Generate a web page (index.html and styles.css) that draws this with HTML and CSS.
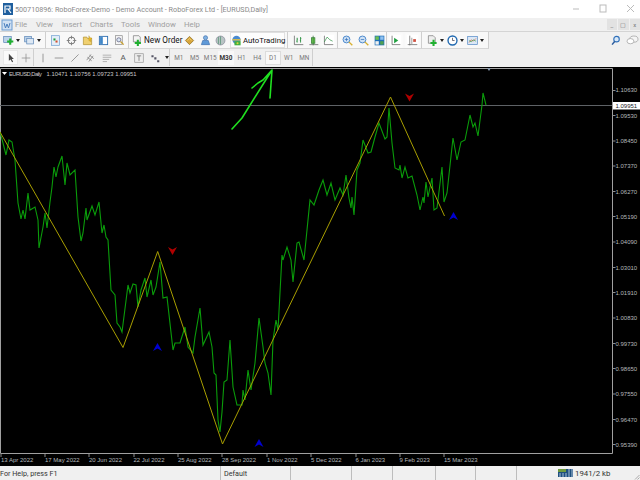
FILE: index.html
```html
<!DOCTYPE html>
<html>
<head>
<meta charset="utf-8">
<title>RoboForex</title>
<link rel="stylesheet" href="styles.css">
</head>
<body>
<div class="app">
  <header class="titlebar">
    <svg class="appicon" viewBox="0 0 10 12"><rect width="10" height="12" fill="#1f5f9e"/><path d="M2 10V3h5v3H3M5 6l3 4" fill="none" stroke="#fff" stroke-width="1.2"/></svg>
    <span class="title">500710896: RoboForex-Demo - Demo Account - RoboForex Ltd - [EURUSD,Daily]</span>
    <div class="wincontrols">
      <svg viewBox="0 0 10 10" class="wc"><path d="M1 5h6" stroke="#bbb" fill="none"/></svg>
      <svg viewBox="0 0 10 10" class="wc"><rect x="1" y="1" width="6" height="7" stroke="#bbb" fill="none"/></svg>
      <svg viewBox="0 0 10 10" class="wc"><path d="M1 1l7 7M8 1L1 8" stroke="#bbb" fill="none"/></svg>
    </div>
  </header>

  <nav class="menubar">
    <svg class="menuicon" viewBox="0 0 12 12"><rect x="1" y="1" width="10" height="10" fill="#cfe0f2" stroke="#6a9bd0"/><path d="M3 4l1.500 5 1.500-4 1.500 4L9 4" fill="none" stroke="#4a7fbd"/></svg>
    <span class="m1">File</span><span class="m2">View</span><span class="m3">Insert</span><span class="m4">Charts</span><span class="m5">Tools</span><span class="m6">Window</span><span class="m7">Help</span>
    <div class="mdi"><i>_</i><i>&#9634;</i><i>x</i></div>
  </nav>

  <div class="toolrow row1">
    <div class="grp g1">
      <svg class="ic" viewBox="0 0 16 16"><rect x="1" y="2" width="11" height="9" fill="#bcd3ea" stroke="#5a85b5"/><path d="M9 5h3v3h3v3h-3v3H9v-3H6V8h3z" fill="#20b030"/></svg><b class="dd"></b>
      <svg class="ic gapl" viewBox="0 0 16 16"><rect x="1" y="2" width="10" height="8" fill="#bcd3ea" stroke="#5a85b5"/><rect x="4" y="5" width="10" height="8" fill="#dde8f4" stroke="#5a85b5"/></svg><b class="dd"></b>
    </div>
    <div class="grp g2">
      <svg class="ic" viewBox="0 0 16 16"><rect x="2" y="1" width="12" height="14" fill="#e4eef8" stroke="#6a9bd0"/><path d="M5 5h3v3H5z" fill="#20a040"/><path d="M8 8h3v3H8z" fill="#d05030"/></svg>
      <svg class="ic" viewBox="0 0 16 16"><circle cx="8" cy="8" r="5" fill="none" stroke="#666" stroke-width="1.300"/><path d="M8 1v5M8 10v5M1 8h5M10 8h5" stroke="#666"/></svg>
      <svg class="ic" viewBox="0 0 16 16"><path d="M2 3h5l1 2h6v9H2z" fill="#f0d070" stroke="#b09030"/><path d="M10 1l1.500 3 3 .5-2 2 .5 3-3-1.500z" fill="#f4c020" stroke="#a08020" stroke-width=".5"/></svg>
      <svg class="ic" viewBox="0 0 16 16"><rect x="2" y="2" width="12" height="12" fill="#fff" stroke="#2f6fb0" stroke-width="1.300"/><rect x="3" y="3" width="4" height="10" fill="#3f86c8"/></svg>
      <svg class="ic" viewBox="0 0 16 16"><rect x="2" y="1" width="10" height="13" fill="#f6f6f6" stroke="#888"/><circle cx="7" cy="7" r="3" fill="#dbe8f5" stroke="#557"/><path d="M9.500 9.500L14 14" stroke="#c8a030" stroke-width="2"/></svg>
    </div>
    <div class="grp g3">
      <svg class="ic" viewBox="0 0 16 16"><path d="M2 1h8l2 2v7H2z" fill="#f4f4f4" stroke="#777"/><path d="M7 7h3v3h3v3h-3v3H7v-3H4v-3h3z" fill="#20b030"/></svg>
      <span class="neworder">New Order</span>
      <svg class="ic i5" viewBox="0 0 16 16"><path d="M2 8l6-6 6 6-6 6z" fill="#d9a63a" stroke="#8a6a1e"/><path d="M5 8l3-3 3 3" fill="none" stroke="#f4df90"/></svg>
      <svg class="ic i5" viewBox="0 0 16 16"><circle cx="8" cy="4" r="3" fill="#7fb0e0" stroke="#3f70b0"/><path d="M2 14l2-6h8l2 6z" fill="#5f9ad8" stroke="#3f70b0"/></svg>
      <svg class="ic i4" viewBox="0 0 16 16"><circle cx="8" cy="8" r="6.500" fill="#b8c4c4" stroke="#889"/><path d="M8 2v12M5 3v10" stroke="#4f8f6f"/></svg>
      <div class="auto">
        <svg class="ic" viewBox="0 0 16 16"><circle cx="8" cy="7" r="6" fill="#4a8ad0"/><path d="M2 7h12" stroke="#e0c040" stroke-width="2"/><path d="M5 9h9v6H5z" fill="#40b040"/><circle cx="9.500" cy="12" r="1.500" fill="#e0d040"/></svg>
        <span>AutoTrading</span>
      </div>
    </div>
    <div class="grp g4">
      <svg class="ic" viewBox="0 0 16 16"><path d="M2 1v13h13" fill="none" stroke="#555"/><path d="M6 4v7M5 9h1M6 6h1M11 3v8M10 8h1M11 5h1" stroke="#2a9040" stroke-width="1.300"/></svg>
      <svg class="ic" viewBox="0 0 16 16"><path d="M2 14h13" stroke="#555"/><rect x="5" y="4" width="5" height="8" fill="#70d050" stroke="#2a7030"/><path d="M7.500 1v14" stroke="#2a7030"/></svg>
      <svg class="ic on" viewBox="0 0 16 16"><path d="M2 1v13h13" fill="none" stroke="#555"/><path d="M2 10l4-7 4 4 4 2" fill="none" stroke="#2a9040"/></svg>
    </div>
    <div class="grp g5">
      <svg class="ic" viewBox="0 0 16 16"><circle cx="6.500" cy="6.500" r="5" fill="#cfe2f6" stroke="#3f80c8" stroke-width="1.300"/><path d="M4 6.500h5M6.500 4v5" stroke="#2f6fb8"/><path d="M10 10l5 5" stroke="#d8b030" stroke-width="2"/></svg>
      <svg class="ic" viewBox="0 0 16 16"><circle cx="6.500" cy="6.500" r="5" fill="#cfe2f6" stroke="#3f80c8" stroke-width="1.300"/><path d="M4 6.500h5" stroke="#2f6fb8"/><path d="M10 10l5 5" stroke="#d8b030" stroke-width="2"/></svg>
      <svg class="ic" viewBox="0 0 16 16"><rect x="1" y="1" width="14" height="14" fill="#1f70b8"/><rect x="2" y="2" width="5" height="5" fill="#70c050"/><rect x="9" y="2" width="5" height="5" fill="#8fc0f0"/><rect x="2" y="9" width="5" height="5" fill="#f0f0f0"/><rect x="9" y="9" width="5" height="5" fill="#50a050"/></svg>
    </div>
    <div class="grp g6">
      <svg class="ic on" viewBox="0 0 16 16"><path d="M3 1v13h12" fill="none" stroke="#555"/><path d="M6 4l6 4-6 4z" fill="#20a040"/></svg>
      <svg class="ic on" viewBox="0 0 16 16"><path d="M4 1v14M1 14h14" stroke="#555"/><path d="M7 4v9" stroke="#777"/><rect x="9" y="6" width="4" height="4" fill="#d05040"/></svg>
    </div>
    <div class="grp g7">
      <svg class="ic" viewBox="0 0 16 16"><path d="M2 1h7l3 3v8H2z" fill="#eee" stroke="#777"/><path d="M8 7h3v3h3v3h-3v3H8v-3H5v-3h3z" fill="#20b030"/></svg><b class="dd"></b>
      <svg class="ic gaps" viewBox="0 0 16 16"><circle cx="8" cy="8" r="6.500" fill="#fff" stroke="#1f68b0" stroke-width="2"/><path d="M8 4v4h3" stroke="#334" fill="none"/></svg><b class="dd"></b>
      <svg class="ic gaps" viewBox="0 0 16 16"><rect x="1" y="2" width="14" height="12" fill="#dce8f6" stroke="#4f86c4"/><path d="M3 11l3-4 3 2 4-4" fill="none" stroke="#d06040"/><path d="M3 8l3 2 3-3 4 2" fill="none" stroke="#40a050"/></svg><b class="dd"></b>
    </div>
    <div class="search">
      <svg class="ic" viewBox="0 0 16 16"><circle cx="9.500" cy="6" r="4" fill="#d8e8f8" stroke="#2f6fb8" stroke-width="1.600"/><path d="M7 9l-4 5" stroke="#2f5f9f" stroke-width="2.200"/></svg>
      <svg class="ic chat" viewBox="0 0 18 16"><ellipse cx="11" cy="6" rx="6" ry="4.500" fill="#f4f4f4" stroke="#999"/><ellipse cx="6" cy="9" rx="5" ry="3.800" fill="#fff" stroke="#999"/></svg>
    </div>
  </div>

  <div class="toolrow row2">
    <div class="grp t1">
      <span class="toolbtn on"><svg viewBox="0 0 12 14"><path d="M3 1v10l2.500-2 2 4 1.500-.8-2-3.700H10z" fill="#444"/></svg></span>
      <span class="toolbtn"><svg viewBox="0 0 14 14"><path d="M7 1v12M1 7h12" stroke="#888" fill="none"/></svg></span>
    </div>
    <div class="grp t2">
      <span class="toolbtn"><svg viewBox="0 0 14 14"><path d="M7 1v12" stroke="#777" fill="none"/></svg></span>
      <span class="toolbtn"><svg viewBox="0 0 14 14"><path d="M1 7h12" stroke="#777" fill="none"/></svg></span>
      <span class="toolbtn"><svg viewBox="0 0 14 14"><path d="M2 12L12 2" stroke="#777" fill="none"/></svg></span>
      <span class="toolbtn"><svg viewBox="0 0 14 14"><path d="M1 10l6-8M4 12l6-8M2 6l6 5M5 3l6 5" stroke="#777" fill="none"/></svg></span>
      <span class="toolbtn"><svg viewBox="0 0 14 14"><path d="M1 3h12M1 6h12M1 9h9M1 12h6" stroke="#999" fill="none"/></svg></span>
      <span class="toolbtn a">A</span>
      <span class="toolbtn"><svg viewBox="0 0 14 14"><rect x="1" y="1" width="12" height="12" fill="#eee" stroke="#999"/><path d="M4 4h6M7 4v7" stroke="#666" fill="none"/></svg></span>
      <span class="toolbtn"><svg viewBox="0 0 14 14"><path d="M2 3h3v3H2zM6 6h3v3H6zM10 10h3v3h-3z" fill="#556"/></svg></span><b class="dd"></b>
    </div>
    <div class="grp tf">
      <span>M1</span><span>M5</span><span>M15</span><span class="m30">M30</span><span>H1</span><span>H4</span><span class="d1">D1</span><span>W1</span><span>MN</span>
    </div>
  </div>

  <main class="chart">
    <svg class="plot" viewBox="0 0 640 399" xmlns="http://www.w3.org/2000/svg">
      <g transform="translate(0,-67)">
        <path class="frame" d="M.5 68.500H612.500V453.500H.5z"/>
        <path class="axis" d="M612.500 90.500h3M612.500 115.500h3M612.500 141h3M612.500 166h3M612.500 191.500h3M612.500 216.500h3M612.500 242h3M612.500 267.500h3M612.500 292.500h3M612.500 318h3M612.500 343.500h3M612.500 368.500h3M612.500 394h3M612.500 419.500h3M612.500 444.500h3"/>
        <path class="axis" d="M1 454v3M45 454v3M89 454v3M134 454v3M178 454v3M222 454v3M267 454v3M311 454v3M356 454v3M400 454v3M444 454v3"/>
        <path class="bid" d="M0 105.500H612"/>
        <polyline class="price" points="0,132 3,143 6,155 9,140 12,142 15,160 18,203 21,219 23,210 25,219 28,193 30,210 35,207 38,220 39,248 43,227 45,213 47,228 50,202 52,187 54,167 56,177 58,167 62,156 65,185 67,163 70,175 75,170 78,217 81,241 83,233 86,208 87,220 92,206 95,215 99,202 102,233 104,225 106,237 108,240 111,290 115,295 117,323 120,327 122,332 128,285 130,293 133,284 136,285 138,307 141,290 145,278 147,297 151,280 153,295 156,287 160,262 163,298 167,297 173,350 175,343 180,343 185,327 188,347 193,353 195,337 200,308 203,345 209,332 212,347 214,373 216,375 218,420 220,432 222,412 224,382 227,380 230,340 233,387 237,405 242,405 243,390 245,400 248,370 251,390 255,363 259,318 263,347 265,363 268,373 271,395 273,340 276,320 278,330 282,255 283,260 287,247 291,260 293,282 297,243 299,242 304,260 307,230 310,200 314,205 319,190 323,180 327,195 331,183 335,200 340,188 343,195 346,175 349,198 351,208 352,197 354,215 357,170 360,163 363,140 368,153 371,152 375,137 379,123 385,139 387,137 389,108 392,143 395,168 399,170 400,165 402,178 405,167 408,178 412,176 417,195 420,210 423,197 424,203 426,182 428,197 432,178 434,210 437,208 442,167 444,202 447,193 453,138 457,160 461,142 465,140 470,115 473,127 475,123 478,136 482,105 483,93 486,105"/>
        <polyline class="zig" points="0,132 123,347.500 157.700,251.500 222.500,444 390.500,97 444.500,216"/>
        <path class="red" d="M405 93.500l4.500 2.500 4.500-2.500-4.500 8z"/>
        <path class="red" d="M168 247l4.500 2.500 4.500-2.500-4.500 8z"/>
        <path class="blue" d="M157.500 343l4.500 8-4.500-2.500-4.500 2.500z"/>
        <path class="blue" d="M259 439l4.500 8-4.500-2.500-4.500 2.500z"/>
        <path class="blue" d="M453.500 212l4.500 8-4.500-2.500-4.500 2.500z"/>
        <path class="marker" d="M487 68l2 3 2-3z"/>
        <path class="corner" d="M2 72h5l-2.500 3z"/>
        <text class="head" x="9" y="75.500" textLength="33">EURUSD,Daily</text>
        <text class="head" x="46.500" y="75.500" textLength="90">1.10471 1.10756 1.09723 1.09951</text>
        <g class="yl">
          <text x="615.500" y="92.300">1.10630</text>
          <text x="615.500" y="117.500">1.09530</text>
          <text x="615.500" y="143">1.08450</text>
          <text x="615.500" y="168.300">1.07370</text>
          <text x="615.500" y="193.500">1.06270</text>
          <text x="615.500" y="218.800">1.05190</text>
          <text x="615.500" y="244.200">1.04090</text>
          <text x="615.500" y="269.500">1.03010</text>
          <text x="615.500" y="294.800">1.01910</text>
          <text x="615.500" y="320.200">1.00830</text>
          <text x="615.500" y="345.500">0.99730</text>
          <text x="615.500" y="370.800">0.98650</text>
          <text x="615.500" y="396.200">0.97550</text>
          <text x="615.500" y="421.500">0.96470</text>
          <text x="615.500" y="446.800">0.95390</text>
        </g>
        <rect class="bidbox" x="613" y="102" width="27" height="7.500"/>
        <text class="bidtxt" x="615.500" y="108">1.09951</text>
        <g class="xl">
          <text x="1" y="461.500">13 Apr 2022</text>
          <text x="45" y="461.500">17 May 2022</text>
          <text x="89" y="461.500">20 Jun 2022</text>
          <text x="133.500" y="461.500">22 Jul 2022</text>
          <text x="178" y="461.500">25 Aug 2022</text>
          <text x="222" y="461.500">28 Sep 2022</text>
          <text x="267" y="461.500">1 Nov 2022</text>
          <text x="311" y="461.500">5 Dec 2022</text>
          <text x="355.500" y="461.500">6 Jan 2023</text>
          <text x="399.500" y="461.500">9 Feb 2023</text>
          <text x="444" y="461.500">15 Mar 2023</text>
        </g>
        <path class="arrow" d="M232 129l10-11 30-48M252 88l6-5 5-3 9-10-2 28"/>
      </g>
    </svg>
  </main>

  <footer class="status">
    <span class="s s1">For Help, press F1</span>
    <span class="s s2">Default</span>
    <span class="s s3"></span><span class="s s4"></span><span class="s s5"></span><span class="s s6"></span><span class="s s7"></span>
    <span class="s s8">
      <svg class="conn" viewBox="0 0 15 8"><path d="M0 0h15v8H0z" fill="#1f4f7f"/><path d="M0 0h8v3H0z" fill="#6f9a3f"/><path d="M2 8V4M5 8V4M8 8V4M11 8V0M14 8V0" stroke="#cfe0f0" stroke-width=".8"/></svg>
      <span>1941/2 kb</span>
    </span>
    <svg class="grip" viewBox="0 0 6 6"><path d="M5.500 1L1 5.500M5.500 3.500L3.500 5.500" stroke="#aaa" fill="none"/></svg>
  </footer>
</div>
</body>
</html>
```
FILE: styles.css
```css
* { box-sizing: border-box; }
html, body { margin: 0; padding: 0; }
body { width: 640px; height: 480px; overflow: hidden; background: #f0f0f0; font-family: Roboto, "Liberation Sans", sans-serif; }
.app { width: 640px; height: 480px; display: flex; flex-direction: column; }

.titlebar { height: 18px; background: #fff; display: flex; align-items: center; padding-left: 2px; flex: none; }
.appicon { width: 10px; height: 12px; margin-right: 2px; margin-left: 1px; }
.title { font-size: 7.200px; color: #8a8a8a; white-space: nowrap; flex: 1; }
.wincontrols { display: flex; gap: 17px; padding-right: 4px; }
.wc { width: 10px; height: 10px; }

.menubar { height: 14px; background: #f0f0f0; display: flex; align-items: center; position: relative; font-size: 7.800px; color: #a0a0a0; border-bottom: 1px solid #d4d4d4; flex: none; }
.menuicon { width: 12px; height: 12px; margin-left: 1px; }
.menubar span { position: absolute; top: 0; line-height: 13px; }
.m1 { left: 15px; } .m2 { left: 36px; } .m3 { left: 62px; } .m4 { left: 90px; } .m5 { left: 121px; } .m6 { left: 148px; } .m7 { left: 184px; }
.mdi { margin-left: auto; display: flex; gap: 1px; }
.mdi i { width: 10.500px; height: 11px; background: #e2e2e2; font-style: normal; font-size: 6px; text-align: center; line-height: 11px; color: #777; }

.toolrow { display: flex; align-items: center; background: #f0f0f0; flex: none; }
.row1 { height: 17px; }
.row2 { height: 18px; padding-bottom: 1px; }
.grp { display: flex; align-items: center; height: 100%; border-right: 1px solid #cfcfcf; flex: none; }
.row1 .grp { background: #f8f8f8; border-bottom: 1px solid #d6d6d6; }
.ic { width: 11px; height: 11px; flex: none; }
.gapl { margin-left: 4.500px; }
.gaps { margin-left: 3.500px; }
.i5 { margin-left: 5px; }
.i4 { margin-left: 4px; }
.ic.on { background: #fff; box-shadow: 0 0 0 1.500px #fbfbfb; }
.dd { width: 0; height: 0; border: 2.500px solid transparent; border-top: 3px solid #222; border-bottom: 0; margin-left: 1.500px; flex: none; }
.g1 { width: 46px; padding-left: 3px; }
.g2 { width: 83px; padding-left: 4px; gap: 5px; }
.g3 { width: 159px; padding-left: 3px; }
.neworder { font-size: 8.200px; color: #111; width: 35px; margin-left: 1px; white-space: nowrap; }
.auto { display: flex; align-items: center; width: 55px; height: 16px; margin-left: 4px; background: #fdfdfd; border: 1px solid #e0e0e0; font-size: 7.800px; color: #111; white-space: nowrap; flex: none; }
.auto .ic { margin-right: 1px; }
.g4 { width: 50px; padding-left: 5px; gap: 4px; }
.g5 { width: 49px; padding-left: 4px; gap: 5px; }
.g6 { width: 35px; padding-left: 3px; gap: 6px; }
.g7 { width: 67px; padding-left: 5px; }
.search { margin-left: auto; display: flex; gap: 5px; padding-right: 1px; }
.search .chat { width: 13px; }

.toolbtn { width: 16px; height: 15px; display: flex; align-items: center; justify-content: center; flex: none; }
.toolbtn svg { width: 10px; height: 10px; }
.toolbtn.on { background: #fafafa; border: 1px solid #e8e8e8; }
.toolbtn.a { font-size: 8px; color: #555; }
.t1 { padding-left: 3px; width: 34px; }
.t1 .toolbtn { width: 15px; }
.t2 { width: 136px; padding-left: 1px; }
.tf { padding-left: 1px; }
.tf span { width: 15.700px; height: 14px; font-size: 6.400px; color: #777; text-align: center; line-height: 14px; flex: none; }
.tf .m30 { background: #f8f8f8; color: #333; font-weight: 700; }
.tf .d1 { background: #f8f8f8; border: 1px solid #dcdcdc; line-height: 12px; }

.chart { height: 399px; background: #000; flex: none; }
.plot { display: block; width: 640px; height: 399px; }
.frame { fill: none; stroke: #a0a0a0; stroke-width: 1; }
.axis { fill: none; stroke: #8c8c8c; stroke-width: 1; }
.bid { stroke: #5e6266; stroke-width: 1.200; fill: none; }
.price { fill: none; stroke: #0a9c0a; stroke-width: 1.100; }
.zig { fill: none; stroke: #a89e00; stroke-width: 1; }
.red { fill: #b00000; }
.blue { fill: #0000d0; }
.marker { fill: #8a9bb0; }
.corner { fill: #fff; }
.arrow { fill: none; stroke: #20e020; stroke-width: 1.600; stroke-linecap: round; stroke-linejoin: round; }
.head { fill: #c8c8c8; font-size: 5.800px; font-family: "Liberation Sans", sans-serif; }
.yl text, .xl text { fill: #b4b8bc; font-size: 6px; font-family: "Liberation Sans", sans-serif; }
.bidbox { fill: #fff; stroke: none; }
.bidtxt { fill: #222; font-size: 6px; font-family: "Liberation Sans", sans-serif; }

.status { flex: 1; min-height: 0; display: flex; background: #f0f0f0; font-size: 7.200px; color: #333; position: relative; }
.s { border-right: 1px solid #bdbdbd; display: flex; align-items: center; height: 100%; flex: none; }
.s1 { width: 221px; }
.s2 { width: 70px; padding-left: 3px; }
.s3 { width: 61px; } .s4 { width: 41px; } .s5 { width: 43px; } .s6 { width: 40px; } .s7 { width: 41px; }
.s8 { border: 0; padding-left: 41px; gap: 2px; font-size: 7.800px; white-space: nowrap; }
.conn { width: 15px; height: 8px; }
.grip { position: absolute; right: 0; bottom: 0; width: 6px; height: 6px; }
```
